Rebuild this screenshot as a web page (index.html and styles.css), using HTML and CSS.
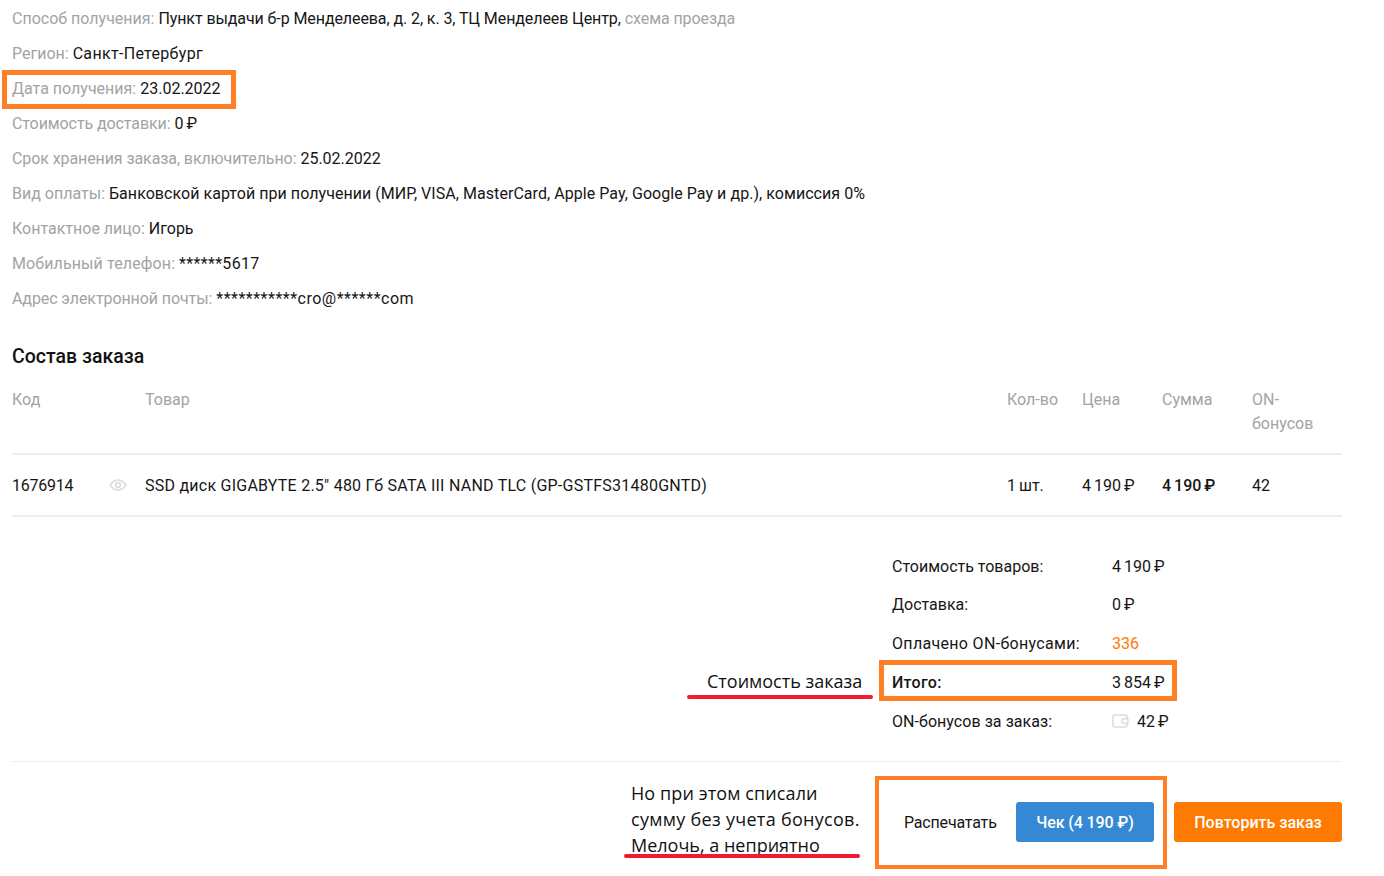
FILE: index.html
```html
<!DOCTYPE html>
<html lang="ru">
<head>
<meta charset="utf-8">
<title>Заказ</title>
<link rel="stylesheet" href="styles.css">
</head>
<body>
<main class="page">
  <section class="info">
    <p class="row"><span class="lbl">Способ получения:</span> <span class="tight">Пункт выдачи б-р Менделеева, д. 2, к. 3, ТЦ Менделеев Центр,</span> <a class="lbl tight">схема проезда</a></p>
    <p class="row"><span class="lbl">Регион:</span> <span class="wide">Санкт-Петербург</span></p>
    <p class="row"><span class="lbl">Дата получения:</span> 23.02.2022</p>
    <p class="row"><span class="lbl tight">Стоимость доставки:</span> <span class="num">0 ₽</span></p>
    <p class="row"><span class="lbl tight">Срок хранения заказа, включительно:</span> 25.02.2022</p>
    <p class="row"><span class="lbl">Вид оплаты:</span> <span class="slight">Банковской картой при получении (МИР, VISA, MasterCard, Apple Pay, Google Pay и др.), комиссия 0%</span></p>
    <p class="row"><span class="lbl">Контактное лицо:</span> Игорь</p>
    <p class="row"><span class="lbl phone-lbl">Мобильный телефон:</span> <span class="wide">******5617</span></p>
    <p class="row"><span class="lbl tight">Адрес электронной почты:</span> <span class="wider">***********cro@******com</span></p>
  </section>
  <h2 class="title">Состав заказа</h2>
  <div class="grid head">
    <span>Код</span><span></span><span>Товар</span><span>Кол-во</span><span>Цена</span><span>Сумма</span><span>ON-<br>бонусов</span>
  </div>
  <div class="grid item">
    <span class="code">1676914</span>
    <svg class="eye" viewBox="0 0 18 12" width="18" height="12" fill="none" stroke="#dcdcdc" stroke-width="1.5"><path d="M1 6C3.5 2.5 6 1 9 1s5.500 1.500 8 5c-2.500 3.500-5 5-8 5S3.500 9.500 1 6z"/><circle cx="9" cy="6" r="2.400"/></svg>
    <span class="product">SSD диск GIGABYTE 2.5" 480 Гб SATA III NAND TLC (GP-GSTFS31480GNTD)</span>
    <span class="num">1 шт.</span><span class="num">4 190 ₽</span><b class="sum num">4 190 ₽</b><span>42</span>
  </div>
  <section class="summary">
    <div class="sline"><span class="sname">Стоимость товаров:</span><span class="num">4 190 ₽</span></div>
    <div class="sline"><span class="sname">Доставка:</span><span class="num">0 ₽</span></div>
    <div class="sline"><span class="sname"><span class="wide">Оплачено ON-бонусами:</span></span><span class="orange">336</span></div>
    <div class="sline total"><span class="sname"><span class="wide">Итого:</span></span><span class="num">3 854 ₽</span></div>
    <div class="sline"><span class="sname"><span class="slight">ON-бонусов за заказ:</span></span>
      <svg class="wallet" viewBox="0 0 17 14" width="17" height="14" fill="none" stroke="#dcdcdc" stroke-width="1.600"><path d="M15 4V2.500C15 1.700 14.300 1 13.500 1H2.500C1.700 1 1 1.700 1 2.500v9c0 .8.700 1.500 1.500 1.500h11c.8 0 1.500-.7 1.500-1.500V10"/><path d="M15.800 4.500h-3.300a2.500 2.500 0 0 0 0 5h3.300z" fill="#fff"/></svg>
      <span class="num">42 ₽</span></div>
  </section>
  <div class="actions">
    <a class="print">Распечатать</a>
    <a class="btn blue">Чек (4 190 ₽)</a>
    <a class="btn amber">Повторить заказ</a>
  </div>
</main>
<div class="mark mark-date"></div>
<div class="mark mark-total"></div>
<div class="mark mark-actions"></div>
<div class="note note-cost">Стоимость заказа</div>
<div class="note note-sum"><span class="n1">Но при этом списали</span><br><span class="n2">сумму без учета бонусов.</span><br>Мелочь, а неприятно</div>
<div class="red red-cost"></div>
<div class="red red-sum"></div>
</body>
</html>
```
FILE: styles.css
```css
* { box-sizing: border-box; }
html, body { margin: 0; background: #fff; }
body {
  width: 1384px; height: 876px; overflow: hidden; position: relative;
  font-family: Roboto, "Noto Sans", sans-serif;
  font-size: 16px; color: #161616;
}
.page { width: 1342px; padding: 1px 0 0 12px; }
.row { margin: 0; height: 35px; line-height: 35px; white-space: nowrap; }
.lbl { color: #a3a3a3; }
.tight { letter-spacing: -.09px; }
.slight { letter-spacing: .05px; }
.wide { letter-spacing: .32px; }
.wider { letter-spacing: .5px; }
.phone-lbl { letter-spacing: .12px; }
.num { word-spacing: -1px; }
.title { margin: 23px 0 0; height: 35px; line-height: 35px; font-size: 19.5px; font-weight: 500; color: #111; }
.grid { display: grid; grid-template-columns: 96px 37px 862px 75px 80px 90px 88px; }
.head { margin-top: 14px; padding-bottom: 17px; line-height: 24px; color: #a3a3a3; border-bottom: 2px solid #eee; }
.item { height: 62px; align-items: center; border-bottom: 2px solid #eee; }
.code { letter-spacing: -.25px; }
.product { letter-spacing: .24px; }
.eye { display: block; margin-left: 1px; }
.sum { font-weight: 500; }
.summary { margin: 29.8px 0 0 880px; height: 216.200px; }
.sline { display: flex; align-items: center; height: 38.75px; }
.sname { width: 220px; }
.orange { color: #ff7a00; }
.total .sname { font-weight: 500; }
.wallet { margin-right: 8px; }
.actions {
  display: flex; align-items: flex-start; height: 82px;
  border-top: 1px solid #eee; padding-top: 40px; margin-top: -2px;
}
.print { margin-left: 892px; width: 112px; line-height: 42px; letter-spacing: -.18px; }
.btn {
  display: flex; align-items: center; justify-content: center;
  height: 40px; padding-top: 1px; border-radius: 3px; color: #fff; font-weight: 500;
}
.blue { width: 138px; background: #3589d4; word-spacing: -.4px; }
.amber { width: 168px; margin-left: 20px; background: #ff7a00; }
.mark { position: absolute; border: 5px solid #ff8024; }
.mark-date { left: 2px; top: 70px; width: 234px; height: 39px; }
.mark-total { left: 879px; top: 660px; width: 298px; height: 41px; }
.mark-actions { left: 875px; top: 776px; width: 292px; height: 93px; border-width: 4px; }
.note { position: absolute; font-family: "Open Sans", sans-serif; font-size: 18px; line-height: 26px; color: #111; white-space: nowrap; }
.note-cost { left: 707px; top: 668px; }
.note-sum { left: 631px; top: 780px; }
.n1 { letter-spacing: .1px; }
.n2 { letter-spacing: .3px; }
.red { position: absolute; height: 4px; border-radius: 2px; background: #ee1c2e; }
.red-cost { left: 687px; top: 695px; width: 186px; }
.red-sum { left: 624px; top: 854px; width: 236px; }
```
